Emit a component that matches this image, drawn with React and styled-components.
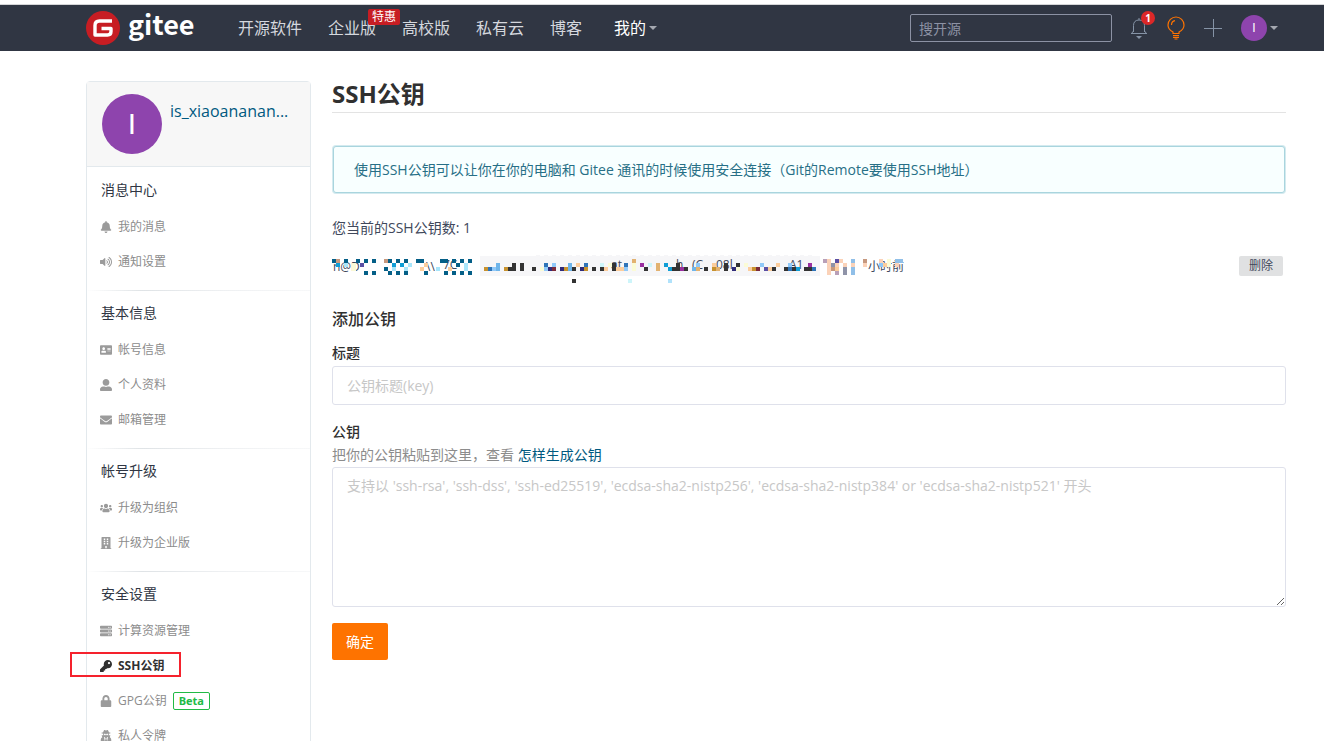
import styled, { createGlobalStyle } from "styled-components"
import {
  FaAddressCard,
  FaBell,
  FaBuilding,
  FaEnvelope,
  FaKey,
  FaLock,
  FaServer,
  FaUserAlt,
  FaUsers,
  FaUserSecret,
  FaVolumeUp,
} from "react-icons/fa"

const menu = [
  {
    title: "消息中心",
    items: [
      { icon: FaBell, label: "我的消息" },
      { icon: FaVolumeUp, label: "通知设置" },
    ],
  },
  {
    title: "基本信息",
    items: [
      { icon: FaAddressCard, label: "帐号信息" },
      { icon: FaUserAlt, label: "个人资料" },
      { icon: FaEnvelope, label: "邮箱管理" },
    ],
  },
  {
    title: "帐号升级",
    items: [
      { icon: FaUsers, label: "升级为组织" },
      { icon: FaBuilding, label: "升级为企业版" },
    ],
  },
  {
    title: "安全设置",
    items: [
      { icon: FaServer, label: "计算资源管理" },
      { icon: FaKey, label: "SSH公钥", active: true },
      { icon: FaLock, label: "GPG公钥", tag: "Beta" },
      { icon: FaUserSecret, label: "私人令牌" },
    ],
  },
]

const palette = {
  t: "#045f87",
  b: "#0f9ed6",
  c: "#a8e6fb",
  n: "#c6987e",
  o: "#fccd9c",
  v: "#5a4fa3",
  y: "#fbfbd6",
  k: "#333333",
  s: "#6fb5ea",
  l: "#90c9f9",
  d: "#2f74b8",
  g: "#c7922f",
  i: "#2f2a78",
  r: "#7b2a3a",
  p: "#9a2fa0",
  e: "#e2b271",
  w: "#cdf5fa",
  m: "#b9a0b8",
  a: "#fbd2b8",
  u: "#8f93a8",
  q: "#90bfe8",
  f: "#f6f6f8",
}

// every row lists its filled cells as column + palette key
const keyCells = [
  "0t 1n 3t 6t 8t 10t 13n 14t 16t 18t 21t 22t 27t 28t 30t 32t 34t",
  "1b 3c 5y 7v 15b 17b 19c 23o 31t 33c",
  "5y 13t 15c 18c 22o 26c 29o 33c",
  "8t 10t 14t 16t 18t 23t 28t 30t 32t 34t",
]

const codeCells = [
  "14f 16f 18f 20f 22f 24f 26f 28f 30f 32f 34f 36f 38f 40f 42f 44f 46f 48f 50f 52f 54f 56f 58f 60f 62f 64f 66f 68f 70f 72f 74f 76f 78f 80f 82f",
  "38e",
  "4s 8k 10k 16d 18l 22s 24o 26d 30w 32y 33k 36d 38y 40p 42w 44e 46b 49k 54l 58o 61k 64k 66y 70l 74o 77l 82p",
  "1g 2d 3l 4s 6g 7k 8k 10k 13k 15y 16l 17i 18r 20i 21g 22s 23k 25i 26g 28k 30k 31o 33k 34o 35o 36l 38y 41k 44e 47b 48k 49k 50p 51k 53s 54e 56k 58g 59e 61k 63i 64y 67o 68g 69r 71v 72o 73k 76k 77d 78k 79b 81k 82k 83d",
]

const timeCells = [
  "0m 1a 3v 4a 7q 10n 14a 16y 18q 19q",
  "1a 2u 3a 5a 7a 10a 14l 15o 16y 18a",
  "1a 2n 3o 5u 7q",
  "1a 3m 5u 7q",
]

const Mosaic = ({ rows, width, top = 3, children }) => (
  <MosaicSvg width={width} height='32' viewBox={`0 0 ${width} 32`} aria-hidden='true'>
    {children}
    {rows.map((row, y) =>
      row.split(" ").map((cell) => (
        <rect
          key={`${y}-${cell}`}
          x={parseInt(cell, 10) * 4}
          y={top + y * 4}
          width='4'
          height='4'
          fill={palette[cell.slice(-1)]}
        />
      ))
    )}
  </MosaicSvg>
)

const Logo = () => (
  <svg width='34' height='34' viewBox='0 0 34 34' aria-hidden='true'>
    <circle cx='17' cy='17' r='17' fill='#c71d23' />
    <path
      d='M26 10H13.5Q9 10 9 14.5V24H21.5Q25 24 25 20.5V17.5H15.5'
      fill='none'
      stroke='#fff'
      strokeWidth='3.4'
      strokeLinejoin='round'
    />
  </svg>
)

const BellIcon = () => (
  <svg width='18' height='22' viewBox='0 0 18 22' fill='none' stroke='#8593a6' aria-hidden='true'>
    <path d='M3.5 15V8.500C3.5 5 5.5 3 9 3s5.500 2 5.500 5.500V15M9 3V1' />
    <path d='M1 16.500h16M3.500 14L1.500 16.500M14.500 14l2 2.500' />
    <path d='M6 19h6l-3 3z' fill='#8593a6' stroke='none' />
  </svg>
)

const BulbIcon = () => (
  <svg width='18' height='24' viewBox='0 0 18 24' fill='none' stroke='#fe7300' strokeWidth='1.2' aria-hidden='true'>
    <path d='M6 17.500V16C3 14.500 1 12 1 9a8 8 0 0 1 16 0C17 12 15 14.500 12 16v1.500z' />
    <path d='M4.500 9C4.500 6.500 6 5 8 4.700M6 19.500h6M6 21.300h6M7.500 23h3' />
  </svg>
)

const PlusIcon = () => (
  <svg width='18' height='18' viewBox='0 0 18 18' stroke='#8593a6' aria-hidden='true'>
    <path d='M0 9.500h18M9.500 0v18' />
  </svg>
)

const Header = () => (
  <TopBar>
    <Brand href='#'>
      <Logo />
      <span>gitee</span>
    </Brand>
    <Nav>
      <NavLink href='#'>开源软件</NavLink>
      <NavLink href='#'>
        企业版<Promo>特惠</Promo>
      </NavLink>
      <NavLink href='#'>高校版</NavLink>
      <NavLink href='#'>私有云</NavLink>
      <NavLink href='#'>博客</NavLink>
      <NavButton type='button'>
        我的
        <Caret />
      </NavButton>
    </Nav>
    <Search type='search' placeholder='搜开源' aria-label='搜开源' />
    <Tools>
      <IconButton type='button' aria-label='消息'>
        <BellIcon />
        <Count>1</Count>
      </IconButton>
      <IconButton type='button' aria-label='动态'>
        <BulbIcon />
      </IconButton>
      <IconButton type='button' aria-label='新建'>
        <PlusIcon />
      </IconButton>
      <UserButton type='button' aria-label='个人菜单'>
        <Avatar $size={26} $font={12}>
          I
        </Avatar>
        <Caret />
      </UserButton>
    </Tools>
  </TopBar>
)

const Sidebar = () => (
  <Side>
    <Profile>
      <Avatar $size={60} $font={30}>
        I
      </Avatar>
      <UserName href='#'>is_xiaoananan...</UserName>
    </Profile>
    {menu.map((group) => (
      <Group key={group.title}>
        <GroupTitle>{group.title}</GroupTitle>
        {group.items.map(({ icon: Icon, label, active, tag }) => (
          <MenuLink key={label} href='#' $active={active}>
            <Icon />
            {label}
            {tag && <Tag>{tag}</Tag>}
          </MenuLink>
        ))}
      </Group>
    ))}
  </Side>
)

const App = () => (
  <>
    <GlobalStyle />
    <Header />
    <Page>
      <Sidebar />
      <Main>
        <Title>SSH公钥</Title>
        <Notice>使用SSH公钥可以让你在你的电脑和 Gitee 通讯的时候使用安全连接（Git的Remote要使用SSH地址）</Notice>
        <Total>您当前的SSH公钥数: 1</Total>
        <KeyRow>
          <Mosaic rows={keyCells} width={141}>
            <MosaicText x='1' y='15'>n@D</MosaicText>
            <MosaicText x='94' y='15'>\\</MosaicText>
            <MosaicText x='111' y='13'>7C</MosaicText>
          </Mosaic>
          <Fingerprint>
            <Mosaic rows={codeCells} width={340} top={-1}>
              <MosaicText x='131' y='13'>at</MosaicText>
              <MosaicText x='196' y='13'>h</MosaicText>
              <MosaicText x='212' y='13'>(C</MosaicText>
              <MosaicText x='236' y='13'>08l</MosaicText>
              <MosaicText x='309' y='13'>A1</MosaicText>
              <rect x='92' y='23' width='4' height='4' fill='#333' />
              <rect x='148' y='23' width='4' height='4' fill='#cdf5fa' />
              <rect x='188' y='23' width='4' height='4' fill='#b0e2fb' />
            </Mosaic>
          </Fingerprint>
          <Mosaic rows={timeCells} width={81}>
            <MosaicText x='45' y='15'>小时前</MosaicText>
          </Mosaic>
          <DeleteButton type='button'>删除</DeleteButton>
        </KeyRow>
        <Form onSubmit={(e) => e.preventDefault()}>
          <h2>添加公钥</h2>
          <Label htmlFor='key-title'>标题</Label>
          <TitleInput id='key-title' placeholder='公钥标题(key)' />
          <Label htmlFor='key-body'>公钥</Label>
          <Hint>
            把你的公钥粘贴到这里，查看 <a href='#'>怎样生成公钥</a>
          </Hint>
          <KeyInput
            id='key-body'
            placeholder="支持以 'ssh-rsa', 'ssh-dss', 'ssh-ed25519', 'ecdsa-sha2-nistp256', 'ecdsa-sha2-nistp384' or 'ecdsa-sha2-nistp521' 开头"
          />
          <Submit type='submit'>确定</Submit>
        </Form>
      </Main>
    </Page>
  </>
)

export default App

const GlobalStyle = createGlobalStyle`
  *, *::before, *::after {
    box-sizing: border-box;
  }
  html {
    height: 100%;
    overflow: hidden;
  }
  body {
    margin: 0;
    background: #fff;
    color: #40485b;
    font-size: 14px;
    line-height: 20px;
  }
  body, button, input, textarea {
    font-family: "Open Sans", "Noto Sans CJK SC", sans-serif;
  }
  a {
    color: #005980;
    text-decoration: none;
  }
  button {
    padding: 0;
    border: 0;
    background: none;
    cursor: pointer;
  }
`

const TopBar = styled.header`
  display: flex;
  align-items: center;
  height: 47px;
  margin-top: 4px;
  padding: 0 46px 0 86px;
  border-top: 1px solid #d5d6d8;
  background: #303643;
`

const Brand = styled.a`
  display: flex;
  align-items: center;
  gap: 8px;
  width: 152px;
  color: #fff;
  span {
    padding-bottom: 8px;
    font: bold 27px/34px "Noto Sans CJK SC", sans-serif;
  }
`

const Nav = styled.nav`
  display: flex;
  gap: 26px;
  font-size: 16px;
  line-height: 24px;
  white-space: nowrap;
`

const NavLink = styled.a`
  position: relative;
  color: #d5d8de;
`

const Promo = styled.span`
  position: absolute;
  top: -7px;
  left: 40px;
  padding: 0 4px;
  border-radius: 2px;
  background: #c71d23;
  color: #fff;
  font-size: 12px;
  line-height: 16px;
`

const NavButton = styled.button`
  display: flex;
  align-items: center;
  gap: 3px;
  padding-left: 6px;
  color: #fff;
  font-size: 16px;
  line-height: 24px;
`

const Caret = styled.span`
  border: 4px solid transparent;
  border-top-color: #a4a8b0;
  border-bottom: 0;
`

const Search = styled.input`
  width: 202px;
  height: 28px;
  margin-left: auto;
  padding: 0 8px;
  border: 1px solid #8c92a4;
  border-radius: 2px;
  background: transparent;
  color: #fff;
  font-size: 14px;
  &::placeholder {
    color: #8c92a4;
  }
`

const Tools = styled.div`
  display: flex;
  align-items: center;
  gap: 19px;
  margin-left: 18px;
`

const IconButton = styled.button`
  position: relative;
  display: flex;
`

const Count = styled.span`
  position: absolute;
  top: -6px;
  left: 11px;
  width: 14px;
  border-radius: 7px;
  background: #db2828;
  color: #fff;
  font-size: 10px;
  font-weight: bold;
  line-height: 14px;
`

const UserButton = styled.button`
  display: flex;
  align-items: center;
  gap: 3px;
`

const Avatar = styled.span`
  display: flex;
  flex: none;
  align-items: center;
  justify-content: center;
  width: ${({ $size }) => $size}px;
  height: ${({ $size }) => $size}px;
  border-radius: 50%;
  background: #8e44ad;
  color: #fff;
  font-family: "Liberation Sans", sans-serif;
  font-size: ${({ $font }) => $font}px;
`

const Page = styled.div`
  display: flex;
  align-items: flex-start;
  gap: 21px;
  padding: 30px 38px 0 86px;
`

const Side = styled.aside`
  flex: none;
  width: 225px;
  border: 1px solid #e3e9ed;
  border-radius: 4px;
`

const Profile = styled.div`
  display: flex;
  gap: 8px;
  height: 85px;
  padding: 12px 15px;
  border-bottom: 1px solid #e3e9ed;
  background: #f7f7f7;
`

const UserName = styled.a`
  padding-top: 5px;
  font-size: 16px;
  line-height: 24px;
`

const Group = styled.div`
  padding: 4px 0 11px;
  & + & {
    padding-top: 3px;
    border-top: 1px solid;
    border-image: linear-gradient(to right, #fff, #dfe3e6 25%, #eef0f2 60%, #f7f8f9) 1;
  }
`

const GroupTitle = styled.div`
  padding-left: 14px;
  color: #303643;
  line-height: 38px;
`

const MenuLink = styled.a`
  position: relative;
  display: flex;
  align-items: center;
  gap: 6px;
  height: 35px;
  padding-left: 13px;
  color: ${({ $active }) => ($active ? "#303030" : "#8c8c8c")};
  font-size: 12px;
  font-weight: ${({ $active }) => ($active ? "bold" : "normal")};
  svg {
    width: 12px;
    height: 12px;
    fill: ${({ $active }) => ($active ? "#303030" : "#9b9b9b")};
  }
  &::after {
    content: ${({ $active }) => ($active ? '""' : "none")};
    position: absolute;
    top: 4px;
    left: -17px;
    width: 111px;
    height: 25px;
    border: 2px solid #f5222d;
  }
`

const Tag = styled.span`
  padding: 0 5px;
  border: 1px solid #21ba45;
  border-radius: 2px;
  color: #21ba45;
  font-size: 11px;
  font-weight: bold;
  line-height: 16px;
`

const Main = styled.main`
  flex: 1;
  min-width: 0;
`

const Title = styled.h1`
  margin: 0;
  padding-bottom: 5px;
  border-bottom: 1px solid #e3e3e3;
  color: #303030;
  font-size: 24px;
  line-height: 26px;
`

const Notice = styled.p`
  margin: 33px 1px 0;
  padding: 12px 20px;
  border-radius: 3px;
  border: 1px solid #a9d5de;
  box-shadow: 0 0 0 1px #d4eaef;
  background: #f8ffff;
  color: #276f86;
  line-height: 21px;
`

const Total = styled.p`
  margin: 25px 0 18px;
`

const KeyRow = styled.div`
  display: flex;
  align-items: flex-start;
  height: 20px;
`

const MosaicSvg = styled.svg`
  flex: none;
  overflow: visible;
`

const MosaicText = styled.text`
  fill: #40485b;
  font-size: 12px;
`

const Fingerprint = styled.code`
  height: 20px;
  margin: 0 3px 0 7px;
  background: #f6f6f8;
  font-family: inherit;
`

const DeleteButton = styled.button`
  margin: 0 3px 0 auto;
  padding: 0 10px;
  border-radius: 2px;
  background: #e0e1e2;
  color: #40485b;
  font-size: 12px;
  line-height: 20px;
`

const Form = styled.form`
  margin-top: 33px;
  h2 {
    margin: 0 0 12px;
    color: #303030;
    font-size: 16px;
    font-weight: 500;
    line-height: 20px;
  }
`

const Label = styled.label`
  display: block;
  color: #303030;
  font-weight: 500;
  line-height: 24px;
`

const TitleInput = styled.input`
  display: block;
  width: 100%;
  height: 39px;
  margin: 1px 0 15px;
  padding: 0 14px;
  border: 1px solid #dfe1eb;
  border-radius: 3px;
  color: #40485b;
  font-size: 14px;
  &::placeholder {
    color: #c7c7c7;
  }
`

const Hint = styled.p`
  margin: 1px 0 2px;
  color: #8c8c8c;
`

const KeyInput = styled.textarea`
  display: block;
  width: 100%;
  height: 140px;
  padding: 8px 14px;
  border: 1px solid #dfe1eb;
  border-radius: 3px;
  color: #40485b;
  font-size: 14px;
  line-height: 20px;
  resize: vertical;
  &::placeholder {
    color: #c7c7c7;
  }
`

const Submit = styled.button`
  margin-top: 16px;
  padding: 0 14px;
  border-radius: 2px;
  background: #fe7300;
  color: #fff;
  font-size: 14px;
  line-height: 37px;
`
